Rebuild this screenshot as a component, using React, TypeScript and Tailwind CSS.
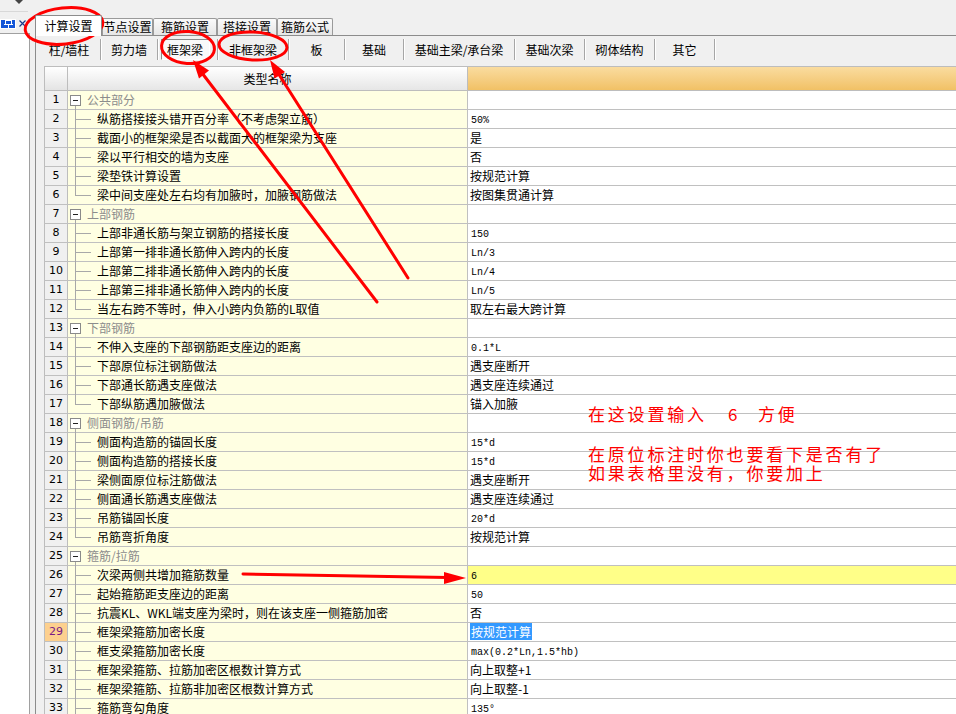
import React from 'react';

type Row = {
  n: number;
  t: string;
  v?: string;
  g?: boolean;
  last?: boolean;
  mono?: boolean;
  yellow?: boolean;
  sel?: boolean;
};

const rows: Row[] = [
  { n: 1, t: '公共部分', g: true },
  { n: 2, t: '纵筋搭接接头错开百分率（不考虑架立筋）', v: '50%', mono: true },
  { n: 3, t: '截面小的框架梁是否以截面大的框架梁为支座', v: '是' },
  { n: 4, t: '梁以平行相交的墙为支座', v: '否' },
  { n: 5, t: '梁垫铁计算设置', v: '按规范计算' },
  { n: 6, t: '梁中间支座处左右均有加腋时，加腋钢筋做法', v: '按图集贯通计算', last: true },
  { n: 7, t: '上部钢筋', g: true },
  { n: 8, t: '上部非通长筋与架立钢筋的搭接长度', v: '150', mono: true },
  { n: 9, t: '上部第一排非通长筋伸入跨内的长度', v: 'Ln/3', mono: true },
  { n: 10, t: '上部第二排非通长筋伸入跨内的长度', v: 'Ln/4', mono: true },
  { n: 11, t: '上部第三排非通长筋伸入跨内的长度', v: 'Ln/5', mono: true },
  { n: 12, t: '当左右跨不等时，伸入小跨内负筋的L取值', v: '取左右最大跨计算', last: true },
  { n: 13, t: '下部钢筋', g: true },
  { n: 14, t: '不伸入支座的下部钢筋距支座边的距离', v: '0.1*L', mono: true },
  { n: 15, t: '下部原位标注钢筋做法', v: '遇支座断开' },
  { n: 16, t: '下部通长筋遇支座做法', v: '遇支座连续通过' },
  { n: 17, t: '下部纵筋遇加腋做法', v: '锚入加腋', last: true },
  { n: 18, t: '侧面钢筋/吊筋', g: true },
  { n: 19, t: '侧面构造筋的锚固长度', v: '15*d', mono: true },
  { n: 20, t: '侧面构造筋的搭接长度', v: '15*d', mono: true },
  { n: 21, t: '梁侧面原位标注筋做法', v: '遇支座断开' },
  { n: 22, t: '侧面通长筋遇支座做法', v: '遇支座连续通过' },
  { n: 23, t: '吊筋锚固长度', v: '20*d', mono: true },
  { n: 24, t: '吊筋弯折角度', v: '按规范计算', last: true },
  { n: 25, t: '箍筋/拉筋', g: true },
  { n: 26, t: '次梁两侧共增加箍筋数量', v: '6', mono: true, yellow: true },
  { n: 27, t: '起始箍筋距支座边的距离', v: '50', mono: true },
  { n: 28, t: '抗震KL、WKL端支座为梁时，则在该支座一侧箍筋加密', v: '否' },
  { n: 29, t: '框架梁箍筋加密长度', v: '按规范计算', sel: true },
  { n: 30, t: '框支梁箍筋加密长度', v: 'max(0.2*Ln,1.5*hb)', mono: true },
  { n: 31, t: '框架梁箍筋、拉筋加密区根数计算方式', v: '向上取整+1' },
  { n: 32, t: '框架梁箍筋、拉筋非加密区根数计算方式', v: '向上取整-1' },
  { n: 33, t: '箍筋弯勾角度', v: '135°', mono: true },
];

const topTabs = [
  { label: '计算设置', w: 'w-[67px]', active: true },
  { label: '节点设置', w: 'w-[51px]' },
  { label: '箍筋设置', w: 'w-[64px]' },
  { label: '搭接设置', w: 'w-[60px]' },
  { label: '箍筋公式', w: 'w-[56px]' },
];

const subTabs = [
  { label: '柱/墙柱', w: 'w-[62px]' },
  { label: '剪力墙', w: 'w-[56px]' },
  { label: '框架梁', w: 'w-[59px]', active: true },
  { label: '非框架梁', w: 'w-[70px]' },
  { label: '板', w: 'w-[55px]' },
  { label: '基础', w: 'w-[58px]' },
  { label: '基础主梁/承台梁', w: 'w-[110px]' },
  { label: '基础次梁', w: 'w-[69px]' },
  { label: '砌体结构', w: 'w-[69px]' },
  { label: '其它', w: 'w-[59px]' },
];

function TreeCell({ r }: { r: Row }) {
  if (r.g) {
    return (
      <div className="relative h-full">
        <div className="absolute left-[2px] top-[4px] w-[11px] h-[11px] border border-[#8a8a8a] bg-white flex items-center justify-center">
          <div className="w-[5px] h-px bg-[#222]" />
        </div>
        <div className="absolute left-[7px] top-[15px] bottom-[-1px] w-px bg-[#a8a8a8]" />
        <div className="absolute left-[19px] top-0 leading-[18px] text-[#8c8c8c]">{r.t}</div>
      </div>
    );
  }
  return (
    <div className="relative h-full">
      {r.last ? (
        <div className="absolute left-[7px] top-0 h-[9px] w-px bg-[#a8a8a8]" />
      ) : (
        <div className="absolute left-[7px] top-0 bottom-[-1px] w-px bg-[#a8a8a8]" />
      )}
      <div className="absolute left-[7px] top-[9px] w-[16px] h-px bg-[#a8a8a8]" />
      <div className="absolute left-[29px] top-0 leading-[18px] text-black whitespace-nowrap">{r.t}</div>
    </div>
  );
}

export default function App() {
  return (
    <div className="relative w-[956px] h-[714px] overflow-hidden bg-[#f0f0f0] flex font-['Noto_Sans_CJK_SC','Noto_Sans_CJK_JP',sans-serif] text-[12px] text-black">
      {/* Left docked panel */}
      <div className="w-[30px] shrink-0 flex flex-col">
        <div className="h-[12px] relative">
          <svg className="absolute left-[15px] top-0" width="8" height="4" viewBox="0 0 8 4">
            <path d="M0 0 L8 0 L4 4 Z" fill="#444" />
          </svg>
          <div className="absolute left-0 right-[2px] bottom-0 h-px bg-[#d8d8d8]" />
        </div>
        <div className="h-[21px] relative">
          <div className="absolute left-0 top-[7px] w-[16px] h-[10px] bg-[#1456d8] border border-white flex items-center justify-center">
            <svg width="9" height="8" viewBox="0 0 9 8">
              <rect x="1.5" y="0.5" width="6" height="4" fill="none" stroke="#fff" strokeWidth="1" />
              <line x1="4.5" y1="4.5" x2="4.5" y2="8" stroke="#fff" strokeWidth="1" />
              <line x1="0" y1="4.5" x2="9" y2="4.5" stroke="#fff" strokeWidth="1" />
            </svg>
          </div>
          <svg className="absolute left-[19px] top-[8px]" width="7" height="7" viewBox="0 0 7 7">
            <path d="M0.5 0.5 L6.5 6.5 M6.5 0.5 L0.5 6.5" stroke="#1a3a8a" strokeWidth="1.2" />
          </svg>
        </div>
        <div className="flex-1 bg-white border-t border-r border-[#a0a0a0]" />
      </div>

      {/* Main panel */}
      <div className="ml-[5px] flex-1 flex flex-col min-w-0">
        {/* top tabs */}
        <div className="h-[36px] shrink-0 flex items-end border-b border-[#8c8c8c]">
          {topTabs.map((t) =>
            t.active ? (
              <div
                key={t.label}
                className={`${t.w} h-[21px] -mb-px bg-white border-l border-t border-r border-[#8c8c8c] rounded-t-[2px] flex items-start justify-center pt-[1px] leading-[17px] relative z-10`}
              >
                {t.label}
              </div>
            ) : (
              <div
                key={t.label}
                className={`${t.w} h-[17px] bg-gradient-to-b from-[#fafafa] to-[#e6e6e6] border-l border-t border-r border-[#9a9a9a] rounded-t-[2px] flex items-center justify-center leading-[16px]`}
              >
                {t.label}
              </div>
            )
          )}
        </div>

        {/* body */}
        <div className="flex-1 border-l border-[#8c8c8c] flex flex-col min-w-0">
          {/* sub tabs */}
          <div className="h-[30px] shrink-0 flex items-start pt-[3px] pl-[2px]">
            {subTabs.map((t) => (
              <React.Fragment key={t.label}>
                <div className={`${t.w} h-[21px] flex items-center justify-center`}>
                  {t.active ? (
                    <div className="w-[49px] h-[21px] ml-[-5px] border-t border-l border-[#8a8a8a] border-r border-b border-r-white border-b-white bg-[#f9f9f9] flex items-center justify-center leading-[16px]">
                      {t.label}
                    </div>
                  ) : (
                    <span className="leading-[16px]">{t.label}</span>
                  )}
                </div>
                <div className="w-px h-[21px] bg-[#a6a6a6] shadow-[1px_0_0_#ffffff]" />
              </React.Fragment>
            ))}
          </div>

          {/* table */}
          <div className="ml-[8px] flex flex-col min-w-0">
            {/* header */}
            <div className="h-[25px] flex border-t border-b border-[#bdbdbd]">
              <div className="w-[24px] shrink-0 border-l border-r border-[#bdbdbd] bg-gradient-to-b from-white to-[#e4e4e4]" />
              <div className="w-[400px] shrink-0 border-r border-[#bdbdbd] bg-gradient-to-b from-white to-[#e6e6e6] flex items-center justify-center leading-[16px]">
                类型名称
              </div>
              <div className="flex-1 bg-gradient-to-b from-[#fadc9f] to-[#f1c165]" />
            </div>
            {rows.map((r) => (
              <div key={r.n} className="h-[19px] flex border-b border-[#c0c0c0]">
                <div
                  className={`w-[24px] shrink-0 border-l border-r border-[#bdbdbd] flex items-center justify-center font-['DejaVu_Sans',sans-serif] text-[11px] leading-[18px] ${
                    r.sel ? 'bg-[#fdd08e] text-[#7a1a86]' : 'bg-[#f0f0f0] text-black'
                  }`}
                >
                  {r.n}
                </div>
                <div className="w-[400px] shrink-0 border-r border-[#c0c0c0] bg-[#ffffe2]">
                  <TreeCell r={r} />
                </div>
                <div className={`flex-1 pl-[2px] leading-[18px] whitespace-nowrap ${r.yellow ? 'bg-[#ffff88]' : 'bg-white'}`}>
                  {r.v &&
                    (r.sel ? (
                      <span className="bg-[#3399ff] text-white px-px">{r.v}</span>
                    ) : r.mono ? (
                      <span className="font-['Liberation_Mono',monospace] text-[10px] pl-px relative top-[-1px]">{r.v}</span>
                    ) : (
                      <span>{r.v}</span>
                    ))}
                </div>
              </div>
            ))}
          </div>
        </div>
      </div>

      {/* Red annotations */}
      <svg className="absolute left-0 top-0 pointer-events-none" width="956" height="714" viewBox="0 0 956 714">
        <g fill="none" stroke="#ff0000" strokeWidth="3" strokeLinecap="round">
          <ellipse cx="64" cy="26" rx="39" ry="18" transform="rotate(-6 64 26)" />
          <ellipse cx="188" cy="47.5" rx="26.5" ry="16" transform="rotate(4 188 47.5)" />
          <ellipse cx="253" cy="46" rx="34" ry="14" transform="rotate(3 253 46)" />
          <line x1="377" y1="302" x2="202" y2="73" />
          <line x1="408" y1="278" x2="278" y2="73" />
          <line x1="243" y1="574" x2="448" y2="577.5" />
        </g>
        <g fill="#ff0000">
          <polygon points="193,60 209,70.5 199,78.5" />
          <polygon points="270,60 285,72 274.5,78.5" />
          <polygon points="466,578 444,572 444,584" />
        </g>
      </svg>
      <div className="absolute left-[588px] top-[404px] text-[17px] leading-[19px] tracking-[2.8px] text-[#ff0000] whitespace-nowrap">
        在这设置输入
      </div>
      <div className="absolute left-[728px] top-[404px] text-[17px] leading-[19px] text-[#ff0000]">6</div>
      <div className="absolute left-[758px] top-[404px] text-[17px] leading-[19px] tracking-[2.8px] text-[#ff0000] whitespace-nowrap">
        方便
      </div>
      <div className="absolute left-[588px] top-[444px] text-[17px] leading-[19px] tracking-[2.8px] text-[#ff0000] whitespace-nowrap">
        在原位标注时你也要看下是否有了
        <br />
        如果表格里没有，你要加上
      </div>
    </div>
  );
}
